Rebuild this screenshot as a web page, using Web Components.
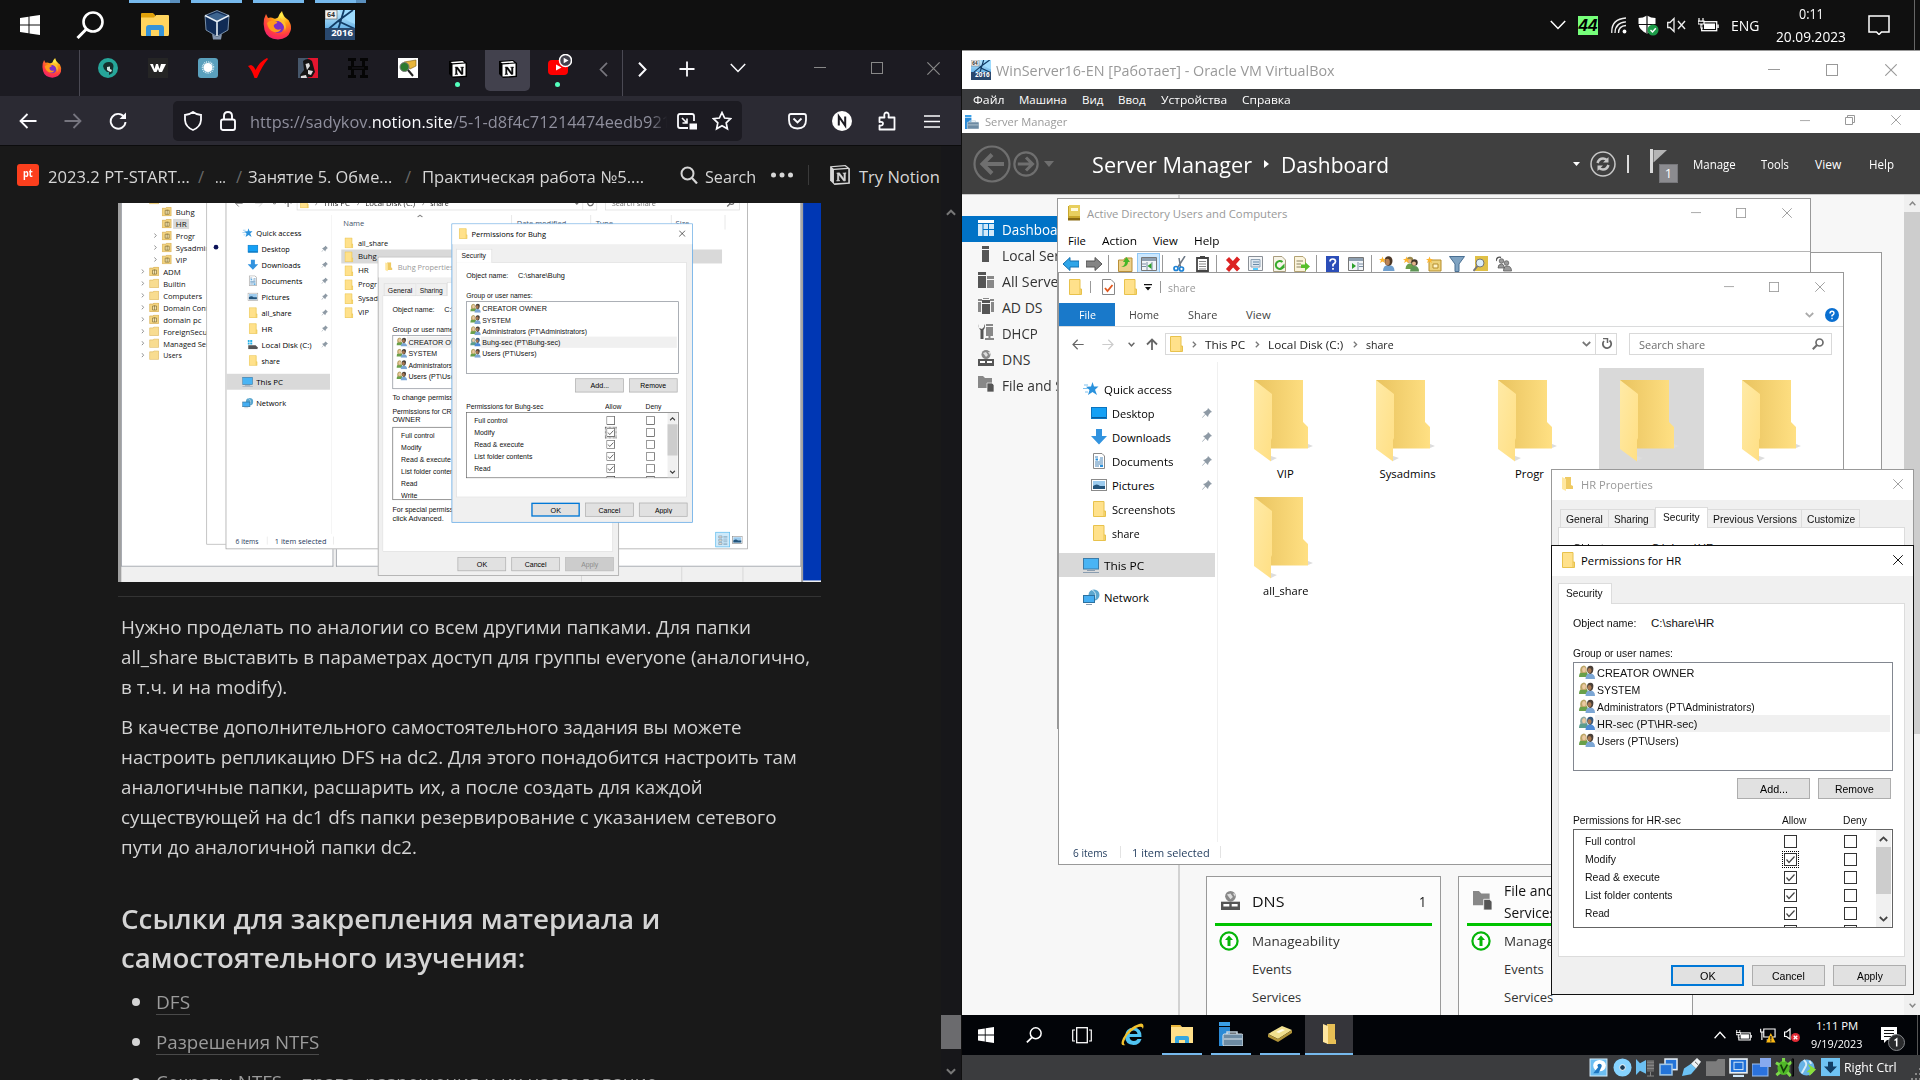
<!DOCTYPE html>
<html lang="ru"><head><meta charset="utf-8"><title>Desktop</title>
<style>
html,body{margin:0;background:#101010}
body{width:1920px;height:1080px;overflow:hidden;font-family:"Open Sans","Noto Sans",sans-serif}
</style></head><body>
<desk-top></desk-top>
<script>
/* Icon drawings: name -> [viewBox, svg body] */
const FOX='<defs><radialGradient id="f" cx=".65" cy=".15" r="1"><stop offset="0" stop-color="#fff44f"/><stop offset=".35" stop-color="#ff980e"/><stop offset=".7" stop-color="#ff3647"/><stop offset="1" stop-color="#e31587"/></radialGradient></defs><path fill="url(#f)" d="M1 8 3 3 5 7Q8 6 11 7.500 13 8 15 6.500 16 3 19 0Q20 5 24 8 26 9 26.500 11Q29 15 27.500 20Q25 28 15 28.500Q4 28 1.500 19Q0 13 1 8Z"/><circle cx="15" cy="16" r="6" fill="#7b2fc8"/><path d="M4 12Q7 8 14 11Q15 12 12 13Q10 14 11 16Q13 20 18 18Q16 22 11 21Q5 19 4 12Z" fill="#ff9a1c"/><path d="M17 7Q25 12 22 20Q21 12 16 10Z" fill="#ffbd2f"/>';
const IC16=t=>'<defs><linearGradient id="b" x2="0" y2="1"><stop stop-color="#c8edff"/><stop offset="1" stop-color="#2d8fd9"/></linearGradient></defs><rect width="30" height="30" fill="url(#b)"/><path d="M14 0 30 0 30 14Q18 10 14 0Z" fill="#9edcff"/><path d="M19 0 13 20M0 22 13 11 30 19M13 11 28 0" stroke="#123c66" stroke-width="1.800" fill="none"/><rect width="12" height="9" fill="#f2f2f2" stroke="#555" stroke-width=".6"/><rect y="18" width="30" height="12" fill="#29486e"/><text x="6" y="7" font-family="Open Sans" font-size="7" font-weight="700" text-anchor="middle" fill="#333">64</text><text x="17" y="26" font-family="Open Sans" font-size="9.500" font-weight="700" text-anchor="middle" fill="#fff">2016</text>';
const NOT='<path d="M1 2 15 1 19 4 19 18 5 19 1 15Z" fill="currentColor"/><path d="M4.500 5.500 17.500 4.600 17.500 16.800 4.500 17.600Z" fill="var(--in,#fff)"/><path d="M2.500 2.900 14.500 2.100 16.500 3.500 4.300 4.300Z" fill="var(--in,#fff)"/><path d="M7 8.200 9.500 8 13.600 13.500V8.800L12.500 8.300 15.500 8V8.500L14.900 8.800V15.300L13.300 15.500 8.900 9.700V14.700L10 15.200 7 15.500V15L7.700 14.700V9Z" fill="currentColor" stroke="currentColor" stroke-width=".5"/>';
const FOLD='<path d="M.5.5H11V10H12.500V15.500H.5Z" fill="#ffe18b" stroke="#e8c24c"/><path d="M11 10V15" stroke="#e8c24c"/>';
const USER=(x,y,h,c)=>`<circle cx="${x}" cy="${y}" r="3.200" fill="${h}"/><circle cx="${x-.5}" cy="${y+1}" r="2" fill="#e2b48c"/><path d="M${x-4.500} ${y+9}Q${x-4} ${y+3.500} ${x} ${y+3.500}Q${x+4.500} ${y+3.500} ${x+4.500} ${y+9}Z" fill="${c}"/>`;
const PAIR=(h1,g,h2,b)=>`<path d="M0 12Q0 7.500 3 7L8 7Q9 9 9 12Z" fill="${g}"/><path d="M1.500 8Q0 1 5 .5Q8.500 1 7.500 8Z" fill="${h1}"/><ellipse cx="5" cy="4.700" rx="1.900" ry="2.600" fill="#ecc9a2"/><path d="M6.500 14Q6.500 8.500 11 8.500Q16 8.500 16 14Z" fill="${b}"/><path d="M8 5Q8 .8 11.500 .8Q15 1 14.300 5Q14 8.500 11.300 9Q8.500 8.500 8 5Z" fill="${h2}"/><ellipse cx="10.500" cy="5.500" rx="2" ry="2.600" fill="#a97851"/>`;
const STAR='<path d="M3.500.5 4.500 3H7L5 4.500 6 7 3.500 5.500 1 7 2 4.500 0 3H2.500Z" fill="#ffb52e"/>';
const I={
win:['0 0 20 20','<path d="M0 3 8.500 1.800V9.500H0ZM9.500 1.600 20 0V9.500H9.500ZM0 10.500H8.500V18.200L0 17ZM9.500 10.500H20V20L9.500 18.400Z" fill="#fff"/>'],
mag:['0 0 28 28','<circle cx="17" cy="11" r="9.500" fill="none" stroke="currentColor" stroke-width="2.600"/><path d="M10.500 18 1.500 27" stroke="currentColor" stroke-width="3"/>'],
mag2:['0 0 18 18','<circle cx="7.500" cy="7.500" r="6" fill="none" stroke="currentColor" stroke-width="2"/><path d="M12 12 17 17.500" stroke="currentColor" stroke-width="2.200"/>'],
expl:['0 0 28 24','<path d="M0 1Q0 0 1 0H12L14 2V6H0Z" fill="#e0a10a"/><path d="M0 4.500H13L15 2H27Q28 2 28 3V21Q28 23 27 23H1Q0 23 0 22Z" fill="#ffd45e"/><path d="M5 23V15Q5 12 8 12H20Q23 12 23 15V23H18V17H10V23Z" fill="#3593d8"/>'],
vbox:['0 0 26 30','<path d="M8 24 13 27 18 24 17 29.500H9Z" fill="#8294ad"/><path d="M13 .5 25 5.500 24 20 13 26.500 2 20 1 5.500Z" fill="#102b55" stroke="#93acc6" stroke-width=".8"/><path d="M4 6 13 2.500 22 6 13 10.500Z" fill="#3d648f"/><path d="M1 5.500 13 11.500 25 5.500M13 11.500V26" fill="none" stroke="#e6eff7" stroke-width="1.600"/>'],
fox:['0 0 29 29',FOX],s16:['0 0 30 30',IC16()],
chd:['0 0 16 10','<path d="M.8 1 8 8.500 15.200 1" fill="none" stroke="currentColor" stroke-width="1.500"/>'],
chu:['0 0 16 10','<path d="M.8 9 8 1.500 15.200 9" fill="none" stroke="currentColor" stroke-width="1.700"/>'],
chdb:['0 0 9 6','<path d="M.8 1 4.500 4.600 8.200 1" fill="none" stroke="currentColor" stroke-width="1.800"/>'],
chub:['0 0 9 6','<path d="M.8 5 4.500 1.400 8.200 5" fill="none" stroke="currentColor" stroke-width="1.800"/>'],
chr:['0 0 9 15','<path d="M1 .8 7.500 7.500 1 14.200" fill="none" stroke="currentColor" stroke-width="2"/>'],
chl:['0 0 9 15','<path d="M8 .8 1.500 7.500 8 14.200" fill="none" stroke="currentColor" stroke-width="1.700"/>'],
crs:['0 0 5 7','<path d="M.8.8 3.600 3.500.8 6.200" fill="none" stroke="currentColor" stroke-width="1.300"/>'],
wifi:['0 0 16 17','<g fill="none" stroke="#eee" stroke-width="1.300"><path d="M.8 16Q0 2 15 1"/><path d="M4 16Q4 5.500 15 4.800"/><path d="M7.500 16Q7.500 9 15 8.500"/></g><circle cx="13.500" cy="14.500" r="1.900" fill="#fff"/>'],
shld:['0 0 21 21','<path d="M9 .5Q13 3 17.500 3V9Q17 15 9 18.500Q1 15 .5 9V3Q5 3 9 .5Z" fill="#fff"/><path d="M9 0V18M0 9.500H18" stroke="#101010" stroke-width="1.200"/><circle cx="15" cy="15" r="5.500" fill="#1c9b48"/><path d="M12.500 15 14.500 17 17.800 13.200" stroke="#fff" fill="none" stroke-width="1.400"/>'],
mute:['0 0 20 16','<path d="M.7 5.500H3L7 1.500V14.500L3 10.500H.7Z" fill="none" stroke="#eee" stroke-width="1.300"/><path d="M11 4 18 12M18 4 11 12" stroke="#eee" stroke-width="1.400"/>'],
bat:['0 0 21 14','<rect x="3.700" y="3.700" width="15" height="9" fill="none" stroke="#fff" stroke-width="1.300"/><rect x="6" y="5.500" width="11" height="5.500" fill="#fff"/><path d="M20 6.500V10" stroke="#fff" stroke-width="1.500"/><path d="M1 0V3M5 0V3M0 3.200H6V6H0ZM3 6V10H5" stroke="#fff" stroke-width="1.200" fill="#101010"/>'],
note:['0 0 22 20','<path d="M1 1H21V17H13.500L11 19.500 8.500 17H1Z" fill="none" stroke="#fff" stroke-width="1.500"/>'],
min:['0 0 12 12','<path d="M0 5.500H12" stroke="currentColor"/>'],
max:['0 0 12 12','<rect x=".5" y=".5" width="11" height="11" fill="none" stroke="currentColor"/>'],
cls:['0 0 12 12','<path d="M.3.3 11.700 11.700M11.700.3.3 11.700" stroke="currentColor" stroke-width="1.100"/>'],
rst:['0 0 10 10','<path d="M.5 2.500H7.500V9.500H.5ZM2.500 2.500V.5H9.500V7.500H7.500" fill="none" stroke="currentColor"/>'],
f1:['0 0 20 20','<circle cx="10" cy="10" r="10" fill="#26a69a"/><path d="M5 8Q6 4 11 4Q15 4 15.500 8L14.500 15 11 17 11 14 9 14 6 11Z" fill="#16302e"/><path d="M9 9 12 8.500V11L14 12 13 14 11 13.500 9 12Z" fill="#d4e6e3"/>'],
f2:['0 0 20 20','<rect width="20" height="20" fill="#252525"/><path d="M2 6H5L6.500 11 8 6H10L11.500 11 13 6H18L14 14H11L10 11 8.500 14H6Z" fill="#fff"/>'],
f3:['0 0 20 20','<rect width="20" height="20" rx="3" fill="#5aa0bd"/><circle cx="10" cy="9.500" r="4.500" fill="#fff"/><circle cx="10" cy="9.500" r="5.500" fill="none" stroke="#e5f3f8" stroke-dasharray=".8 1" stroke-width="1.500"/>'],
f4:['0 0 20 20','<path d="M0 8 3 7Q6 8 7.500 12Q12 3 19 0L20 1Q14 8 9 20H6.500Q4 12 0 8Z" fill="#f00"/>'],
f5:['0 0 20 20','<rect width="11" height="20" fill="#46576b"/><rect x="10" width="10" height="20" fill="#e4152f"/><path d="M5 3Q10-1 14 3L17 14 14 19 3 20 2 17 6 12Z" fill="#141414"/><path d="M7.500 6 11 5 12 8 9 12ZM10 12 15 13 13 17 10 16ZM3 18 8 17 9 20H3Z" fill="#ddd"/>'],
f6:['0 0 20 20','<path d="M0 0H8V3H6V8H14V3H12V0H20V3H17V8H20V12H17V17H20V20H12V17H14V12H6V17H8V20H0V17H3V12H0V8H3V3H0Z" fill="#050505"/><path d="M4 10H16" stroke="#1c1b22"/>'],
f7:['0 0 20 20','<rect width="20" height="20" fill="#fff"/><path d="M6 4 18 2 18 8 12 11Z" fill="#e8b53a" stroke="#7a5a10" stroke-width=".6"/><circle cx="6.500" cy="9" r="4.500" fill="#2c7a2f" stroke="#777"/><path d="M10 12 15 18" stroke="#222" stroke-width="2"/>'],
not:['0 0 20 20',NOT],
yt:['0 0 24 24','<rect y="6" width="20" height="15" rx="4" fill="#f00"/><path d="M8 10.500 13.500 13.500 8 16.500Z" fill="#fff"/><circle cx="17.500" cy="6.500" r="6" fill="#42414d" stroke="#fff" stroke-width="1.500"/><path d="M15.700 3.700 20.500 6.500 15.700 9.300Z" fill="#fff"/>'],
plus:['0 0 16 16','<path d="M8 .5V15.500M.5 8H15.500" stroke="currentColor" stroke-width="1.800"/>'],
ar:['0 0 18 16','<path d="M17.500 8H1.500M8.500 1 1.500 8 8.500 15" fill="none" stroke="currentColor" stroke-width="1.800"/>'],
arr:['0 0 18 16','<path d="M.5 8H16.500M9.500 1 16.500 8 9.500 15" fill="none" stroke="currentColor" stroke-width="1.800"/>'],
aru:['0 0 12 12','<path d="M6 12V1.500M1 6.500 6 1.500 11 6.500" fill="none" stroke="currentColor" stroke-width="1.800"/>'],
rel:['0 0 18 18','<path d="M15 4.800A7.400 7.400 0 1 0 16.500 10" fill="none" stroke="currentColor" stroke-width="1.900"/><path d="M17 .5V7H10.500Z" fill="currentColor"/>'],
shd:['0 0 18 20','<path d="M9 1Q13 4 17 4V9Q16.500 16 9 19Q1.500 16 1 9V4Q5 4 9 1Z" fill="none" stroke="currentColor" stroke-width="1.800"/>'],
lock:['0 0 16 20','<rect x="1" y="8.500" width="14" height="10.500" rx="2" fill="none" stroke="currentColor" stroke-width="1.900"/><path d="M4 8.500V5Q4 1 8 1Q12 1 12 5V8.500" fill="none" stroke="currentColor" stroke-width="1.900"/>'],
pip:['0 0 20 17','<path d="M17 8V3Q17 1 15 1H3Q1 1 1 3V13Q1 15 3 15H11" fill="none" stroke="currentColor" stroke-width="1.800"/><path d="M5 5 9.500 9.500M10 5.500V10H5.500" fill="none" stroke="currentColor" stroke-width="1.600"/><rect x="12.500" y="10.500" width="7.500" height="6" fill="currentColor"/>'],
star:['0 0 20 20','<path d="M10 1.500 12.600 7 18.600 7.700 14.200 11.800 15.400 17.800 10 14.800 4.600 17.800 5.800 11.800 1.400 7.700 7.400 7Z" fill="none" stroke="currentColor" stroke-width="1.700"/>'],
pock:['0 0 19 17','<path d="M3 1H16Q18 1 18 3V7Q18 15.500 9.500 15.500Q1 15.500 1 7V3Q1 1 3 1Z" fill="none" stroke="currentColor" stroke-width="1.800"/><path d="M5.500 5.500 9.500 9.500 13.500 5.500" fill="none" stroke="currentColor" stroke-width="1.800"/>'],
ncir:['0 0 20 20','<circle cx="10" cy="10" r="10" fill="#fff"/><path d="M6.800 14.500V5.500L13.200 14.500V5.500" fill="none" stroke="#1c1b22" stroke-width="2"/>'],
ext:['0 0 18 20','<path d="M1.500 18.500V14.500Q5 15 5 12.500Q5 10.500 1.500 11V6.500H6.500Q5.500 1.500 8.500 1.500Q11.500 1.500 10.500 6.500H16.500V18.500Z" fill="none" stroke="currentColor" stroke-width="1.800" stroke-linejoin="round"/>'],
burg:['0 0 16 13','<path d="M0 1H16M0 6.500H16M0 12H16" stroke="currentColor" stroke-width="1.700"/>'],
dots:['0 0 24 6','<g fill="currentColor"><circle cx="3.500" cy="3" r="2.500"/><circle cx="12" cy="3" r="2.500"/><circle cx="20.500" cy="3" r="2.500"/></g>'],
sm:['0 0 24 24','<rect width="11" height="4" fill="#3aa0e8"/><rect y="5" width="11" height="19" fill="#2a8ad6"/><path d="M8 12V10H18V12" fill="none" stroke="#c3d2dd" stroke-width="1.500"/><rect x="4" y="12" width="20" height="12" rx="1.500" fill="#6d8ba3" stroke="#dfe8ee"/><path d="M5 17H23" stroke="#dfe8ee"/>'],
bk:['0 0 38 38','<circle cx="19" cy="19" r="17.500" fill="none" stroke="currentColor" stroke-width="2.200"/><path d="M31 19H10M19 9.500 9.500 19 19 28.500" fill="none" stroke="currentColor" stroke-width="4"/>'],
fw:['0 0 38 38','<circle cx="19" cy="19" r="17" fill="none" stroke="currentColor" stroke-width="3.200"/><path d="M7 19H28M19 9.500 28.500 19 19 28.500" fill="none" stroke="currentColor" stroke-width="4.500"/>'],
td:['0 0 10 6','<path d="M0 0H10L5 6Z" fill="currentColor"/>'],tr:['0 0 6 10','<path d="M0 0 6 5 0 10Z" fill="currentColor"/>'],
ref:['0 0 26 26','<circle cx="13" cy="13" r="12" fill="none" stroke="#c8c8c8" stroke-width="1.500"/><path d="M7.500 12Q9 7.500 13 7.500Q15 7.500 17 9M18.500 14Q17 18.500 13 18.500Q11 18.500 9 17" fill="none" stroke="#c8c8c8" stroke-width="2.500"/><path d="M18.500 6V11.500H13ZM7.500 20V14.500H13Z" fill="#c8c8c8"/>'],
flag:['0 0 28 34','<path d="M0 0H3V24H0Z" fill="#d8d8d8"/><path d="M3.500 1H17L3.500 13.500Z" fill="#b5b5b5"/><rect x="9.500" y="15.500" width="18" height="18" fill="#8c8c90" stroke="#77777b"/>'],
d1:['0 0 16 16','<path d="M0 0H16V3H0ZM0 4H4.500V16H0ZM5.500 4H10V9H5.500ZM11 4H16V9H11ZM5.500 10H10V16H5.500ZM11 10H16V16H11Z" fill="#d5eaf9"/><path d="M0 0H16V3H0Z" fill="#fff"/>'],
d2:['0 0 16 16','<path d="M4 0H11V3H4ZM4 4H11V16H4Z" fill="#555"/>'],
d3:['0 0 16 16','<path d="M0 0H8V3H0ZM0 4H8V16H0Z" fill="#555"/><path d="M9 4H16V7H9ZM9 8H16V16H9Z" fill="#888"/>'],
d4:['0 0 16 16','<path d="M0 1H4V3H0ZM0 4H3V14H0ZM12 1H16V3H12ZM13 4H16V14H13ZM5 0H11V1H5Z" fill="#888"/><path d="M4 2H12V5H4ZM4 6H12V16H4Z" fill="#555"/>'],
d5:['0 0 16 16','<path d="M1 0V4L4 5 6 3V0Q8 3 5.500 6V15H2.500V6Q0 4 1 0Z" fill="#555"/><path d="M8 0H15V2H8ZM8 3H15V12H8ZM10.500 12H12.500V14H16V16H7V14H10.500Z" fill="#888"/>'],
d6:['0 0 16 16','<circle cx="8" cy="4.500" r="4.500" fill="#888"/><path d="M5 3 8 2 10 5 8 7ZM10 2H12V5Z" fill="#ddd"/><path d="M0 9H16V16H0Z" fill="#555"/><path d="M2 11H7V13H2ZM9 11H14V13H9Z" fill="#fff"/>'],
d7:['0 0 16 16','<path d="M0 0H5L7 2H14V7H9V12H0ZM0 3H6" fill="#888"/><path d="M9 7H14L16 9V16H9Z" fill="#555" stroke="#f7f7f7" stroke-width=".7"/>'],
up:['0 0 20 20','<circle cx="10" cy="10" r="8.600" fill="#fff" stroke="#06b50a" stroke-width="2.200"/><path d="M10 4.500 14 9H11.500V15H8.500V9H6Z" fill="#06b50a"/>'],
book:['0 0 13 16','<path d="M0 1H12V15H0Z" fill="#c8a62c"/><path d="M1 0H12V11H1Z" fill="#e8cf5e"/><path d="M3 3H10V6H3Z" fill="#fffbe0"/><path d="M0 13H12V15.500H0Z" fill="#8a6b12"/>'],
tl:['0 0 16 14','<path d="M0 7 7 .5V4H16V10H7V13.500Z" fill="#2fa5e8" stroke="#1470b0"/>'],
tg:['0 0 16 14','<path d="M16 7 9 .5V4H0V10H9V13.500Z" fill="#858585" stroke="#555"/>'],
tf:['0 0 15 16','<path d="M.5 4H6L7 2H14V15.500H.5Z" fill="#ecd089" stroke="#b98f37"/><path d="M3 11Q7 10 7 6H5L8.500 1 12 6H10Q10 11 3 11Z" fill="#45b628"/>'],
tw:['0 0 16 15','<path d="M.5 1.500H15.500V14.500H.5Z" fill="#f2f5f8" stroke="#777"/><path d="M1 2H15V5H1Z" fill="#8e9fb0"/><path d="M6 6V14M1 8H5M1 10.500H5M11 6V14" stroke="#7a8fa5"/><path d="M10.500 7V13L6.500 10Z" fill="#2ca12c"/>'],
tw2:['0 0 16 15','<path d="M.5 1.500H15.500V14.500H.5Z" fill="#f2f5f8" stroke="#777"/><path d="M1 2H15V5H1Z" fill="#8e9fb0"/><path d="M10 6V14M11 8H15M11 10.500H15" stroke="#7a8fa5"/><path d="M4 7V13L8 10Z" fill="#2ca12c"/>'],
tcut:['0 0 13 16','<path d="M12 0 5 11M6 2 7.500 11" stroke="#6d7885" stroke-width="1.500"/><circle cx="3" cy="12.500" r="2" fill="none" stroke="#1d83d6" stroke-width="1.700"/><circle cx="8.500" cy="13" r="2" fill="none" stroke="#1d83d6" stroke-width="1.700"/>'],
tp:['0 0 13 16','<path d="M1 2H12V15H1Z" fill="#fff" stroke="#444" stroke-width="1.800"/><path d="M4 0H9V3H4Z" fill="#444"/><path d="M3 5.500H10M3 8H10M3 10.500H10M3 13H10" stroke="#888"/>'],
tx:['0 0 16 16','<path d="M2.500 2.500 13.500 14M13.500 2 2.500 14.500" stroke="#dc2222" stroke-width="4.200"/>'],
tpr:['0 0 15 16','<path d="M.5.5H14.500V14.500H.5Z" fill="#f4f6f8" stroke="#8a8f96"/><path d="M3 3.500H12V11H3Z" fill="#dce6ef" stroke="#8fa1b3"/><path d="M5 6H11M5 8.500H11" stroke="#6789a8"/><path d="M5 13H10" stroke="#5cf" stroke-width="2"/>'],
vl:['0 0 15 16','<path d="M1 2H6V5H1ZM1 7H6V10H1ZM1 12H6V15H1ZM8 3H14M8 5H14M8 8H14M8 10H14M8 13H14M8 15H14" fill="#e8d9c8" stroke="#7d9db5"/>'],
trf:['0 0 13 16','<path d="M.5.5H9L12.500 4V15.500H.5Z" fill="#f7f4e8" stroke="#a99d7f"/><path d="M9.500 6A4 4 0 1 0 10.500 10.500" fill="none" stroke="#38ab2c" stroke-width="2"/><path d="M11.500 7.500V12H7Z" fill="#38ab2c"/>'],
tex:['0 0 16 16','<path d="M.5.5H9L11.500 3V15.500H.5Z" fill="#fbf4dc" stroke="#b3a273"/><path d="M2.500 5H9M2.500 8H7M2.500 11H7" stroke="#8a8260"/><path d="M7 8.500H11V6L16 10.500 11 15V12H7Z" fill="#58bf2c"/>'],
th:['0 0 13 16','<rect width="13" height="16" fill="#2b4db8"/><path d="M4 5.500Q4 3 6.700 3Q9.500 3 9.500 5.500Q9.500 7 7 8.500V10.500M7 12V13.800" fill="none" stroke="#fff" stroke-width="1.700"/>'],
u1:['0 0 16 16','<path d="M4 15Q4 9 9.500 9Q15.500 9 15.500 15Z" fill="#6f9fce"/><ellipse cx="9.500" cy="5" rx="4" ry="4.800" fill="#4b3626"/><ellipse cx="8.500" cy="6" rx="2.300" ry="3.200" fill="#b98357"/>'+STAR],
u2:['0 0 16 16',USER(7,4,'#9a8a50','#6b9f4b')+USER(11.500,6.500,'#3f3328','#5d9554')+STAR],
u3:['0 0 16 16','<path d="M3 4H15V15H3Z" fill="#ecd27c" stroke="#b58d2a"/><path d="M7 8H12V12H7Z" fill="#fff3c8" stroke="#b58d2a"/>'+STAR],
fil:['0 0 16 16','<path d="M.5.5H15.500L10 8V15.500H6V8Z" fill="#7fa3c2" stroke="#496f92"/>'],
fnd:['0 0 15 16','<path d="M2 0H15V15H2Z" fill="#e0c046"/><circle cx="7" cy="7" r="4" fill="#dbeefa" stroke="#777"/><path d="M4.500 10 .5 15" stroke="#777" stroke-width="2"/>'],
grp:['0 0 16 16','<g fill="#9a9a9a" stroke="#555" stroke-width=".7"><circle cx="5.500" cy="5" r="2.300"/><circle cx="10.500" cy="7" r="2.300"/><path d="M2 12Q2 8 5.500 8Q8 8 8.500 12ZM7.500 15Q7.500 10 11 10Q15.500 10 15.500 15Z"/></g><path d="M0 5Q1 0 5 1.500" fill="none" stroke="#555" stroke-width="1.400"/>'],
fold:['0 0 13 16',FOLD],
chk:['0 0 13 16','<path d="M.5.5H9L12.500 4V15.500H.5Z" fill="#fff" stroke="#888"/><path d="M3 9 5.500 12 10.500 6" fill="none" stroke="#e2581e" stroke-width="1.800"/>'],
qat:['0 0 8 7','<path d="M0 0H8V1.200H0ZM1 3H7L4 6.500Z" fill="#111"/>'],
hlp:['0 0 14 14','<circle cx="7" cy="7" r="7" fill="#0a6fd0"/><path d="M5 5.500Q5 3.300 7 3.300Q9 3.300 9 5.300Q9 6.500 7 7.500V8.500M7 9.800V11.300" fill="none" stroke="#fff" stroke-width="1.400"/>'],
rfs:['0 0 12 12','<path d="M8.500 2.500A4.200 4.200 0 1 1 3 3" fill="none" stroke="currentColor" stroke-width="1.800"/><path d="M2 .5H6.500V5" fill="none" stroke="currentColor" stroke-width="1.500"/>'],
sms:['0 0 12 12','<circle cx="7.500" cy="4.500" r="3.500" fill="none" stroke="currentColor" stroke-width="1.700"/><path d="M5 7 .8 11.200" stroke="currentColor" stroke-width="2"/>'],
qa:['0 0 16 14','<path d="M9.500 0 11 4.500 15.500 4.500 12 7.800 14 13 9.500 10 5 13 6.500 8 3 4.800 8 4.500Z" fill="#2a92dd"/><path d="M1 3H5M0 6.500H5M2 10H5" stroke="#7cc0ee"/>'],
dsk:['0 0 16 12','<rect x=".5" y=".5" width="15" height="11" fill="#14a0f5" stroke="#0b74bf"/><path d="M1 10.500H15" stroke="#0a5c9c"/>'],
dwn:['0 0 16 16','<path d="M5 0H11V7H16L8 15.500 0 7H5Z" fill="#3293df"/>'],
doc:['0 0 12 16','<path d="M.5.5H9L11.500 3V15.500H.5Z" fill="#fff" stroke="#8a8a8a"/><path d="M2 9H10M2 11H10M2 13H6M2 4H5M7 5H10M6.500 7H10" stroke="#4a86b8"/><path d="M2.500 6.500H5M7 13H10" stroke="#2a92dd" stroke-width="1.800"/>'],
pic:['0 0 16 12','<rect x=".5" y=".5" width="15" height="11" fill="#fff" stroke="#8a8a8a"/><rect x="2" y="2" width="12" height="8" fill="#9ccbee"/><path d="M2 7Q6 4 9 7L14 7V10H2Z" fill="#24557c"/>'],
ldk:['0 0 16 14','<path d="M1 8H12L15 11V14H1Z" fill="#555"/><path d="M0 0H3V3H0ZM4 0H7V3H4ZM0 4H3V7H0ZM4 4H7V7H4Z" fill="#27b1e6"/>'],
pc:['0 0 16 15','<rect x=".5" y=".5" width="15" height="10.500" fill="#49b4f4" stroke="#3b7ba8"/><path d="M4 12.500H12M0 14.500H16" stroke="#8a9db0"/>'],
net:['0 0 17 16','<circle cx="11" cy="6" r="5.500" fill="#5ba7cf"/><path d="M9 1Q14 3 12 10" stroke="#c9e6f3" fill="none"/><rect x=".5" y="6.500" width="11" height="7" fill="#45aef2" stroke="#2d719f"/><path d="M3 15.500H9" stroke="#8a9db0"/>'],
pin:['0 0 10 10','<path d="M6 0 10 4 8.500 4.500 6.500 7 6 9 3.500 6.500.5 9.800 0 9.500 3.200 6 1 4 3 3.500 5.500 1.500Z" fill="#8e9aa5"/>'],
big:['0 0 60 82','<defs><linearGradient id="a" x1="0" x2="1"><stop stop-color="#e9c35f"/><stop offset="1" stop-color="#ffe083"/></linearGradient><linearGradient id="c" x2="1" y2="1"><stop stop-color="#ffeaa6"/><stop offset="1" stop-color="#ffdf84"/></linearGradient></defs><path d="M54 68 59 66 54 64ZM17 81 23 78 17 76Z" fill="#ddd"/><path d="M0 0H49V42L54 47V68.500H10Z" fill="url(#a)"/><path d="M0 0 18 14V58L17 60V81.500L0 69Z" fill="url(#c)"/>'],
usr:['0 0 16 14',PAIR('#b9a566','#69a04a','#4a4038','#7ba6d4')],
usx:['0 0 16 14',PAIR('#8aa8a0','#5c9d8c','#34587d','#4d8ad6')],
prp:['0 0 11 14','<path d="M3 0H9V8L11 9V12H3Z" fill="#efca63"/><path d="M0 0 4 2V14L0 12Z" fill="#ffe7a0"/>'],
tkv:['0 0 20 17','<rect x="4.700" y=".7" width="10.600" height="15" fill="none" stroke="#fff" stroke-width="1.300"/><path d="M3 3H.7V14H3M17 3H19.300V14H17" fill="none" stroke="#fff" stroke-width="1.200"/>'],
ie:['0 0 24 24','<path d="M20.500 14H8.500Q9 18 13 18Q15.500 18 16.500 16H20.500Q18.500 22 12.500 22Q4 21.500 4 13Q4.500 5 12.500 4.500Q21 5 20.500 14ZM8.700 11H16.500Q16 7.500 12.600 7.500Q9.200 7.500 8.700 11Z" fill="#4fc3f2"/><path d="M4.500 22Q-2 24 2 15Q8 4 18 1Q24-1 22 6Q21 2 15 5Q5 11 3 19Q2.500 22 4.500 22Z" fill="#f2c12c"/>'],
ex2:['0 0 22 18','<path d="M0 0H9L11 2H22V18H0Z" fill="#ffe08a"/><path d="M0 0H9L10.500 2H0Z" fill="#e9b63b"/><path d="M4 18V13Q4 11 6 11H16Q18 11 18 13V18H14V15H8V18Z" fill="#35a7e0"/>'],
bk2:['0 0 24 16','<path d="M0 8 14 0 24 4 10 13Z" fill="#f1e08f"/><path d="M0 8 10 13V16L0 11ZM10 13 24 4V7L10 16Z" fill="#b09338"/><path d="M8 6 14 3 17 4 11 7Z" fill="#fffbe2"/>'],
fl2:['0 0 13 20','<path d="M4 0H12V15L13 16V20H4Z" fill="#e7bf55"/><path d="M0 0 5 2V20L0 18Z" fill="#ffe7a0"/>'],
ntw:['0 0 17 15','<path d="M4 1H16V9H4ZM7 12H13M10 9V12M.7.7V4H4M2 4V12" fill="none" stroke="#fff" stroke-width="1.200"/><path d="M11.500 5 16.500 14.500H6.500Z" fill="#fcb813"/><path d="M11.500 8V11.500M11.500 12.300V13.500" stroke="#222" stroke-width="1.300"/>'],
vmx:['0 0 16 14','<path d="M.6 4H2.500L6 1V11L2.500 8.500H.6Z" fill="none" stroke="#fff" stroke-width="1.200"/><circle cx="11.500" cy="9.500" r="4.500" fill="#e02a34"/><path d="M9.700 7.700 13.300 11.300M13.300 7.700 9.700 11.300" stroke="#fff" stroke-width="1.300"/>'],
nt2:['0 0 24 24','<path d="M0 0H16V13H6L3 16V13H0Z" fill="#fff"/><path d="M3 3.500H13M3 6.500H13M3 9.500H10" stroke="#111"/><circle cx="15.500" cy="15.500" r="8" fill="#2a2b2d" stroke="#85888b"/><path d="M13.500 13.500 15.700 12V19.500" stroke="#fff" fill="none" stroke-width="1.500"/>'],
v1:['0 0 18 20','<path d="M1 1H17V19H1Z" fill="#6cbef2" stroke="#d2ebfa"/><circle cx="10" cy="8" r="6" fill="#fff"/><path d="M10 8 4 16H9L12 9Z" fill="#1e77c2"/><circle cx="10" cy="8" r="2" fill="#1e77c2"/>'],
v2:['0 0 20 20','<circle cx="10" cy="10" r="9.500" fill="#86d3ff"/><circle cx="10" cy="10" r="3" fill="#1a3c56" stroke="#fff"/>'],
v3:['0 0 19 18','<path d="M0 1 4 5 10 2V15L4 12 0 16Z" fill="#6cc0f2"/><path d="M11 2H18V13H11Z" fill="#666"/><path d="M11 4H18M11 7H18M11 10H18M14.500 13V16.500M11 17H18" stroke="#858585"/>'],
v4:['0 0 19 18','<rect x="6" y="1" width="12" height="10" fill="#2474d8" stroke="#e5eef5" stroke-width="1.500"/><rect x="1" y="6" width="12" height="10" fill="#2474d8" stroke="#9fc5e5" stroke-width="1.500"/>'],
v5:['0 0 19 20','<path d="M0 19 2 11 9 6 14 11 9 17Z" fill="#6cc2f5"/><path d="M9 6 15 0 19 4 14 11Z" fill="#eef3f6"/><path d="M13 4 16 7" stroke="#555"/>'],
v6:['0 0 19 18','<path d="M0 3H10L12 1H19V17H0Z" fill="#7c7c7c"/>'],
v7:['0 0 19 18','<rect x="1" y="1" width="17" height="13" fill="#1e6fd6" stroke="#e8eef2" stroke-width="1.600"/><rect x="5" y="4" width="9" height="7" fill="none" stroke="#cfe6f8"/><path d="M4 17H15" stroke="#cfe6f8" stroke-width="2"/>'],
v8:['0 0 19 19','<rect y="6" width="16" height="12" fill="#2b72dd" stroke="#9fc0ee"/><rect x="8" width="11" height="9" fill="#87a9ee"/>'],
v9:['0 0 20 20','<ellipse cx="9" cy="10.500" rx="6.500" ry="7.500" fill="#50b828"/><path d="M1 5 4.500 7M14 7 17.500 4M1.500 18 5 15M13 15 16.500 19M9 0V4" stroke="#7bd94a" stroke-width="3.200"/><path d="M6 7 9 14 13 7" stroke="#143e0a" fill="none" stroke-width="1.800"/><path d="M18 1H19.500V19H18Z" fill="none" stroke="#000"/>'],
v10:['0 0 20 20','<circle cx="9" cy="10" r="8.500" fill="#67b3e6"/><path d="M6 2Q10 5 8 9L4 16M12 3 14 6" stroke="#d7ecf8" stroke-width="2" fill="none"/><path d="M10 6 19 12 12 19V15H9L13 11Z" fill="#8ae03c"/>'],
v11:['0 0 19 20','<rect width="19" height="19" fill="#6fc3f3"/><path d="M7 4H12V9H16L9.500 16 3 9H7Z" fill="#123d63"/>'],
grip:['0 0 12 12','<path d="M10 0H12V2H10ZM6 5H8V7H6ZM10 5H12V7H10ZM2 10H4V12H2ZM6 10H8V12H6ZM10 10H12V12H10Z" fill="#888"/>'],
ck:['0 0 13 13','<rect x=".5" y=".5" width="12" height="12" fill="#fff" stroke="#333"/><path d="M2.500 6.500 5 9.500 10.500 3.500" fill="none" stroke="#444" stroke-width="1.200"/>'],
cb:['0 0 13 13','<rect x=".5" y=".5" width="12" height="12" fill="#fff" stroke="#333"/>'],
ou:['0 0 15 14','<path d="M.5 2H6L7 .5H14V13.500H.5Z" fill="#f3d481" stroke="#d3a848"/><path d="M5 5H11V11H5ZM8 4V11" fill="#f7e7b4" stroke="#7e6a31"/>'],
cn:['0 0 15 14','<path d="M.5 2H6L7 .5H14V13.500H.5Z" fill="#f8dc90" stroke="#dcb65f"/>']
};
const define=(name,css,html)=>customElements.define(name,class extends HTMLElement{
  connectedCallback(){ if(this.shadowRoot) return;
    const root=this.attachShadow({mode:'open'});
    root.innerHTML=`<style>:host{display:block;box-sizing:border-box;flex:none}*{box-sizing:border-box}.r{display:flex;align-items:center}${css}</style>`+(typeof html==='function'?html(this):html); }
});
const A=(e,n,d='')=>e.getAttribute(n)??d;
define('i-c','svg{display:block;width:100%;height:100%}',e=>{
  const [vb,body]=I[A(e,'n')]; const s=vb.split(' ');
  e.style.width=A(e,'w',s[2])+'px'; e.style.height=A(e,'h',s[3])+'px'; if(e.hasAttribute('g')) e.style.marginLeft=A(e,'g')+'px';
  return `<svg viewBox="${vb}" preserveAspectRatio="none">${body}</svg>`;});
define('v-sep',':host{width:1px;background:#999}',e=>{e.style.marginLeft=A(e,'g',0)+'px';e.style.height=A(e,'h',14)+'px';return ''});

/* Top host taskbar */
define('app-button',':host{width:51px;height:50px;border-top:3px solid #76b9ed;position:relative;padding-bottom:3px;display:flex;align-items:center;justify-content:center}:host([multi])::after{content:"";position:absolute;right:0;top:-3px;width:10px;height:3px;background:#5a8fbd}',e=>{e.style.marginLeft=A(e,'g')+'px';return '<slot></slot>'});
define('task-bar',`:host{display:flex;align-items:center;height:50px;background:#101010;color:#fff}
.clock{margin-left:16px;width:70px;display:flex;flex-direction:column;align-items:center;font-size:14.500px;line-height:23px;margin-top:0}
.n{margin-left:12px;width:20px;height:19px;background:#76ff7a;color:#000;font:italic 700 17px/20px "Liberation Sans",sans-serif;display:flex;justify-content:center}`,
`<i-c n="win" g="20"></i-c><i-c n="mag" g="36"></i-c>
<app-button g="25" multi><i-c n="expl"></i-c></app-button><app-button g="11"><i-c n="vbox" w="26" h="30"></i-c></app-button><app-button g="11"><i-c n="fox" style="margin-left:-2px"></i-c></app-button><app-button g="11" multi><i-c n="s16" style="margin-left:-2px"></i-c></app-button>
<i-c n="chd" g="1184"></i-c><div class="n"><t-t w="19">44</t-t></div><i-c n="wifi" g="13"></i-c><i-c n="shld" g="11"></i-c><i-c n="mute" g="8"></i-c><i-c n="bat" g="11"></i-c><t-t g="12" w="29" style="font-size:14.500px">ENG</t-t>
<div class="clock"><t-t w="25">0:11</t-t><t-t w="70">20.09.2023</t-t></div><i-c n="note" g="22"></i-c><v-sep g="24" h="50" style="background:#666"></v-sep>`);

/* Browser */
define('fav-tab',':host{width:50px;height:46px;display:flex;flex-direction:column;align-items:center;padding-top:8px;position:relative}:host([dot])::after{content:"";position:absolute;top:32px;left:22px;width:5px;height:5px;border-radius:3px;background:#54ffbd}:host([active]) ::slotted(*){position:relative}:host([active])::before{content:"";position:absolute;left:2px;top:0;width:45px;height:41px;background:#42414d;border-radius:0 0 5px 5px}','<slot></slot>');
define('url-bar',':host{display:flex;align-items:center;width:569px;height:40px;background:#1c1b22;border-radius:5px;color:#fbfbfe;font-size:16px;padding-top:1px}.u{color:#8f8f9d;width:417px;margin:2px 0 0 14px;display:flex;-webkit-mask:linear-gradient(90deg,#000 96%,transparent)}b{font-weight:400;color:#fbfbfe}',
'<i-c n="shd" g="11"></i-c><i-c n="lock" g="18"></i-c><div class="u"><t-t w="421">https://sadykov.<b>notion.site</b>/5-1-d8f4c71214474eedb921</t-t></div><i-c n="pip" g="10"></i-c><i-c n="star" g="15"></i-c>');
define('crumb-bar',':host{display:flex;align-items:center;height:55px;padding-top:6px;color:#d6d6d6;font-size:16.500px}.pt{margin-left:17px;width:22px;height:22px;border-radius:3px;background:#fc3f1d;color:#fff;font-size:10px;font-weight:700;line-height:18px;display:flex;justify-content:center;margin-bottom:3px}.s{color:#6a6a6a}',
'<div class="pt"><t-t w="10">pt</t-t></div><t-t g="9" w="142">2023.2 PT-START...</t-t><t-t class="s" g="8" w="6">/</t-t><t-t g="11" w="11">...</t-t><t-t class="s" g="10" w="6">/</t-t><t-t g="6" w="144">Занятие 5. Обме...</t-t><t-t class="s" g="13" w="6">/</t-t><t-t g="11" w="222">Практическая работа №5....</t-t><i-c n="mag2" g="36" style="margin-bottom:4px"></i-c><t-t g="7" w="51">Search</t-t><i-c n="dots" g="14" style="margin-bottom:4px"></i-c><v-sep g="14" h="20" style="background:#3a3a3a;margin-bottom:4px"></v-sep><i-c n="not" g="20" w="22" h="22" style="--in:#191919;margin-bottom:4px"></i-c><t-t g="8" w="81">Try Notion</t-t>');
const L=(w,t)=>`<div><t-t w="${w}">${t}</t-t></div>`;
define('page-article',`:host{width:703px;margin:2px 0 0 118px;color:#d4d4d4;font-size:18.500px;height:877px;overflow:hidden}
hr{border:0;height:1px;background:#333;margin:14px 0 0}.p{line-height:30px;padding-left:3px}.a{margin-top:15px}.b{margin-top:10px}
.h{margin-top:37px;font-size:27.500px;font-weight:600;line-height:39px;padding-left:3px}
ul{list-style:none;margin:5px 0 0;padding:0}li{display:flex;align-items:center;height:40px;color:#9b9b9b}li::before{content:"";width:8px;height:8px;border-radius:4px;background:#d4d4d4;margin:0 16px 0 14px}li t-t{line-height:24px;border-bottom:1px solid #4a4a4a}`,
`<shot-view></shot-view><hr><div class="p a">${L(630,'Нужно проделать по аналогии со всем другими папками. Для папки')}${L(689,'all_share выставить в параметрах доступ для группы everyone (аналогично,')}${L(166,'в т.ч. и на modify).')}</div>
<div class="p b">${L(621,'В качестве дополнительного самостоятельного задания вы можете')}${L(676,'настроить репликацию DFS на dc2. Для этого понадобится настроить там')}${L(582,'аналогичные папки, расшарить их, а после создать для каждой')}${L(656,'существующей на dc1 dfs папки резервирование с указанием сетевого')}${L(296,'пути до аналогичной папки dc2.')}</div>
<div class="h">${L(539,'Ссылки для закрепления материала и')}${L(404,'самостоятельного изучения:')}</div>
<ul><li><t-t w="34">DFS</t-t></li><li><t-t w="163">Разрешения NTFS</t-t></li><li><t-t w="501">Секреты NTFS – права, разрешения и их наследование</t-t></li></ul>`);
define('browser-window',`:host{width:962px;height:1030px;background:#191919;border-right:1px solid #101010}
.tabs{height:46px;background:#1c1b22;color:#fbfbfe;padding-bottom:8px}.tabs>fav-tab{margin-bottom:-8px}
.nav{height:50px;background:#2b2a33;color:#fbfbfe;border-bottom:1px solid #0c0c0d;padding-top:1px}
.main{display:flex}.col{width:941px}.sb{width:20px;height:934px;background:#17171a;display:flex;flex-direction:column;align-items:center;color:#777;padding-top:63px}.th{width:20px;height:34px;background:#6b6b6e;margin-top:799px}`,
`<div class="r tabs"><fav-tab style="margin-left:27px"><i-c n="fox" w="20" h="20"></i-c></fav-tab><v-sep g="2" h="46" style="background:#4a4953;margin-bottom:-8px"></v-sep>
<fav-tab style="margin-left:3px"><i-c n="f1"></i-c></fav-tab>${['f2','f3','f4','f5','f6','f7'].map(n=>`<fav-tab><i-c n="${n}"></i-c></fav-tab>`).join('')}<fav-tab dot><i-c n="not" style="color:#000;margin-top:1px"></i-c></fav-tab><fav-tab active><i-c n="not" style="color:#000;margin-top:1px"></i-c></fav-tab><fav-tab dot><i-c n="yt" style="margin:-4px 0 0 4px"></i-c></fav-tab>
<i-c n="chl" g="16" style="color:#77767e"></i-c><v-sep g="14" h="46" style="background:#4a4953;margin-bottom:-8px"></v-sep><i-c n="chr" g="15"></i-c><i-c n="plus" g="32"></i-c><i-c n="chd" g="35" style="margin-bottom:3px"></i-c><i-c n="min" g="68" style="color:#888;margin-bottom:2px"></i-c><i-c n="max" g="45" style="color:#888;margin-bottom:2px"></i-c><i-c n="cls" g="44" w="13" h="13" style="color:#888;margin-bottom:2px"></i-c></div>
<div class="r nav"><i-c n="ar" g="19"></i-c><i-c n="arr" g="27" style="color:#76757f"></i-c><i-c n="rel" g="27"></i-c><url-bar style="margin:-1px 0 0 46px"></url-bar><i-c n="pock" g="46"></i-c><i-c n="ncir" g="25"></i-c><i-c n="ext" g="26"></i-c><i-c n="burg" g="28"></i-c></div>
<div class="main"><div class="col"><crumb-bar></crumb-bar><page-article></page-article></div><div class="sb"><i-c n="chub" w="10" h="7"></i-c><div class="th"></div><i-c n="chdb" w="10" h="7" style="margin-top:19px"></i-c></div></div>`);

/* Explorer parts */
define('nav-item',':host{display:flex;align-items:center;height:24px;width:156px;color:#000;font-size:11.300px}:host([sel]){background:#d9d9d9}:host([top]){margin-top:8px}.i{width:16px;display:flex;justify-content:center;margin-right:5px}.e{flex:1}',
e=>{e.style.paddingLeft=(e.hasAttribute('root')?24:32)+'px';return `<div class="i"><i-c n="${A(e,'i')}"></i-c></div><t-t w="${A(e,'tw')}">${A(e,'t')}</t-t><div class="e"></div>${e.hasAttribute('pin')?'<i-c n="pin" style="margin-right:3px"></i-c>':''}`});
/* The "cut" attribute leaves out the title and ribbon labels when those rows lie outside the frame */
define('file-explorer',`:host{display:flex;flex-direction:column;width:786px;height:593px;background:#fff;border:1px solid #999;font-size:11.300px}
.t{height:30px;color:#999;padding-bottom:2px}.rb{height:24px;border-bottom:1px solid #dadbdc;color:#444}.f{width:56px;height:23px;background:#1979ca;color:#fff;display:flex;align-items:center;justify-content:center}
.ad{height:35px;color:#666;padding-bottom:1px}.bx{width:452px;height:22px;border:1px solid #d9d9d9;margin-left:7px;color:#222}.sx{width:203px;height:22px;border:1px solid #d9d9d9;margin-left:12px;color:#6d6d6d}
.bd{flex:1;display:flex;min-height:0}.nv{width:159px;padding-top:15px;border-right:1px solid #f0f0f0}.st{height:22px;color:#1e395b;padding-bottom:2px}`,
e=>{const cut=e.hasAttribute('cut');return `<div class="r t">${cut?'':'<i-c n="fold" g="10"></i-c><v-sep g="8" h="12"></v-sep><i-c n="chk" g="11"></i-c><i-c n="fold" g="9"></i-c><i-c n="qat" g="7"></i-c><v-sep g="8" h="12"></v-sep><t-t g="7" w="28">share</t-t><i-c n="min" w="10" h="10" g="528"></i-c><i-c n="max" w="10" h="10" g="35"></i-c><i-c n="cls" w="10" h="10" g="36"></i-c>'}</div>
<div class="r rb">${cut?'':'<div class="f"><t-t w="17">File</t-t></div><t-t g="14" w="30">Home</t-t><t-t g="29" w="29">Share</t-t><t-t g="29" w="25">View</t-t><i-c n="chdb" g="534" style="color:#aaa"></i-c><i-c n="hlp" g="11"></i-c>'}</div>
<div class="r ad"><i-c n="ar" g="13" w="12" h="11" style="color:#666"></i-c><i-c n="arr" g="18" w="12" h="11" style="color:#ccc"></i-c><i-c n="chdb" g="14" w="7" h="5"></i-c><i-c n="aru" g="11"></i-c>
<div class="r bx"><i-c n="fold" g="4"></i-c><i-c n="crs" g="9" style="color:#777"></i-c><t-t g="8" w="40">This PC</t-t><i-c n="crs" g="10" style="color:#777"></i-c><t-t g="8" w="75">Local Disk (C:)</t-t><i-c n="crs" g="10" style="color:#777"></i-c><t-t g="8" w="28">share</t-t><i-c n="chdb" g="188" style="color:#777"></i-c><v-sep g="4" h="20" style="background:#d9d9d9"></v-sep><i-c n="rfs" g="5" style="color:#666"></i-c></div>
<div class="r sx"><t-t g="9" w="66">Search share</t-t><i-c n="sms" g="107"></i-c></div></div>
<div class="bd"><div class="nv"><slot name="nav"></slot></div><slot></slot></div>
<div class="r st"><t-t g="14" w="34">6 items</t-t><v-sep g="13" h="12" style="background:#e3e3e3"></v-sep><t-t g="11" w="78">1 item selected</t-t><v-sep g="10" h="12" style="background:#e3e3e3"></v-sep></div>`});
define('folder-tile',':host{width:105px;height:116px;padding-top:12px;font-size:11.300px;display:flex;flex-direction:column}:host([sel]){background:#d9d9d9}.l{display:flex;justify-content:center;margin-top:3px;line-height:18px}',
e=>`<i-c n="big" g="21"></i-c><div class="l"><t-t w="${A(e,'tw')}">${A(e,'t')}</t-t></div>`);
define('folder-grid',':host{display:grid;grid-template-columns:repeat(5,105px);gap:1px 17px;padding:6px 0 0 15px;align-content:start}','<slot></slot>');

/* Dialog parts */
define('push-button',':host{width:73px;height:21px;border:1px solid #adadad;background:#e1e1e1;display:flex;align-items:center;justify-content:center;color:#000;margin-right:8px}:host([def]){border:2px solid #0078d7}:host([off]){background:#ccc;border-color:#bfbfbf;color:#8c8c8c}:host([last]){margin-right:0}',e=>`<t-t w="${A(e,'tw')}">${A(e,'t')}</t-t>`);
define('user-row',':host{display:flex;align-items:center;height:17px;padding-left:5px}i-c{margin-bottom:1px}.x{flex:1;height:17px;margin-right:2px;padding-left:2px;display:flex;align-items:center}:host([sel]) .x{background:#f0f0f0}',e=>`<i-c n="${e.hasAttribute('sel')&&e.hasAttribute('tint')?'usx':'usr'}"></i-c><div class="x"><t-t w="${A(e,'tw')}">${A(e,'t')}</t-t></div>`);
define('perm-row',':host{display:flex;align-items:center;height:18px}.l{flex:none;width:199px;padding-left:11px}.l t-t{margin-top:-1px}.c{flex:none;width:60px;padding-left:11px}.c+.c{width:40px}:host([foc]) .f i-c{outline:1px dotted #000;outline-offset:1px}',
e=>`<div class="l">${A(e,'t')?`<t-t w="${A(e,'tw')}">${A(e,'t')}</t-t>`:''}</div><div class="c f"><i-c n="${e.hasAttribute('on')?'ck':'cb'}"></i-c></div><div class="c"><i-c n="cb"></i-c></div>`);
const DLG=`:host{width:363px;background:#f0f0f0;border:1px solid #111;font-family:"Liberation Sans",sans-serif;font-size:11.500px;color:#111;display:flex;flex-direction:column}
.t{height:30px;background:#fff;font-family:"Open Sans",sans-serif;font-size:11.300px;color:#000;padding-bottom:2px}.pg{margin-left:6px;width:347px;background:#fff;border:1px solid #dcdcdc;padding-left:14px}
.tab{background:#fff;border:1px solid #dcdcdc;border-bottom:0;display:flex;align-items:center;justify-content:center}.o{height:20px}.bx{width:320px;border:1px solid #828790;background:#fff}`;
define('perm-dialog',DLG+`:host{height:450px}.tab{width:54px;height:21px;margin:7px 0 -1px 6px;position:relative;justify-content:flex-start;padding-bottom:2px}.pg{height:354px}.lst{height:109px;padding-top:1px}
.pb{border-color:#646464;height:99px;overflow:hidden;display:flex}.rows{width:302px;flex:none;padding-top:2.500px}.sc{width:15px;height:97px;background:#f0f0f0;display:flex;flex-direction:column;align-items:center;padding-top:6px;color:#444}.th{width:15px;height:47px;background:#cdcdcd;margin:5px 0 22px;flex:none}`,
e=>{const n=A(e,'name'),w=A(e,'ws').split(',');return `<div class="r t"><i-c n="fold" g="10"></i-c><t-t g="6" w="${w[0]}">Permissions for ${n}</t-t><div style="flex:1"></div><i-c n="cls" w="10" h="10" style="margin-right:10px"></i-c></div>
<div class="tab"><t-t g="7" w="37">Security</t-t></div><div class="pg"><div class="r o" style="margin-top:9px"><t-t w="63">Object name:</t-t><t-t g="15" w="${w[1]}">C:\\share\\${n}</t-t></div>
<div class="r" style="height:18px;margin-top:11px"><t-t w="100">Group or user names:</t-t></div>
<div class="bx lst"><user-row t="CREATOR OWNER" tw="97"></user-row><user-row t="SYSTEM" tw="43"></user-row><user-row t="Administrators (PT\\Administrators)" tw="158"></user-row><user-row sel tint t="${n}-sec (PT\\${n}-sec)" tw="${w[2]}"></user-row><user-row t="Users (PT\\Users)" tw="82"></user-row></div>
<div class="r" style="margin-top:7px;padding-left:164px"><push-button t="Add..." tw="28"></push-button><push-button t="Remove" tw="39"></push-button></div>
<div class="r" style="height:18px;margin-top:12px;width:320px"><t-t w="${w[3]}">Permissions for ${n}-sec</t-t><div style="flex:1"></div><t-t w="24">Allow</t-t><t-t g="37" w="24" style="margin-right:26px">Deny</t-t></div>
<div class="bx pb"><div class="rows"><perm-row t="Full control" tw="50"></perm-row><perm-row on foc t="Modify" tw="31"></perm-row><perm-row on t="Read &amp; execute" tw="75"></perm-row><perm-row on t="List folder contents" tw="88"></perm-row><perm-row on t="Read" tw="25"></perm-row><perm-row></perm-row></div><div class="sc"><i-c n="chub"></i-c><div class="th"></div><i-c n="chdb"></i-c></div></div></div>
<div class="r" style="margin-top:8px;padding-left:119px"><push-button def t="OK" tw="16"></push-button><push-button t="Cancel" tw="33"></push-button><push-button last t="Apply" tw="26"></push-button></div>`});
define('props-dialog',DLG+`:host{height:480px;border-color:#999}.t{color:#999}.tabs{display:flex;align-items:flex-end;height:28px;padding-left:8px;margin-bottom:-1px;position:relative}.tb{height:19px;border:1px solid #dcdcdc;background:#f0f0f0;display:flex;align-items:center;justify-content:center;border-left-width:0}.tb.s{height:21px;background:#fff;border-bottom:0;border-left-width:1px;padding-bottom:2px}.tb:first-child{border-left-width:1px}.pg{height:416px;overflow:hidden}.lb{line-height:13px}`,
e=>{const n=A(e,'name'),full=e.hasAttribute('full');return `<div class="r t"><i-c n="prp" g="10"></i-c><t-t g="8" w="${A(e,'w')}">${n} Properties</t-t><div style="flex:1"></div>${full?'':'<i-c n="cls" w="10" h="10" style="margin-right:10px"></i-c>'}</div>
<div class="tabs"><div class="tb" style="width:49px"><t-t w="37">General</t-t></div><div class="tb" style="width:46px"><t-t w="35">Sharing</t-t></div>${full?'<div class="tb s" style="width:54px"></div>':'<div class="tb s" style="width:53px"><t-t w="37">Security</t-t></div><div class="tb" style="width:94px"><t-t w="84">Previous Versions</t-t></div><div class="tb" style="width:58px"><t-t w="48">Customize</t-t></div>'}</div>
<div class="pg" style="height:${full?386:416}px"><div class="r o" style="margin-top:10px"><t-t w="63">Object name:</t-t><t-t g="15" w="${n=='HR'?63:71}">C:\\share\\${n}</t-t></div>
${full?`<div class="r" style="height:18px;margin-top:11px"><t-t w="100">Group or user names:</t-t></div><div class="bx" style="height:81px;padding-top:1px"><user-row sel t="CREATOR OWNER" tw="97"></user-row><user-row t="SYSTEM" tw="43"></user-row><user-row t="Administrators (PT\\Administrators)" tw="158"></user-row><user-row t="Users (PT\\Users)" tw="82"></user-row></div>
<div style="margin-top:6px"><t-t w="164">To change permissions, click Edit.</t-t></div><div class="lb" style="margin-top:9px"><t-t w="124">Permissions for CREATOR</t-t></div><div class="lb"><t-t w="42">OWNER</t-t></div>
<div class="bx" style="height:110px;margin-top:4px;padding:3px 0 0 12px;line-height:18px;border-color:#646464">${[['Full control',50],['Modify',31],['Read &amp; execute',75],['List folder contents',88],['Read',25],['Write',25]].map(x=>`<div style="height:18px"><t-t w="${x[1]}">${x[0]}</t-t></div>`).join('')}</div>
<div class="lb" style="margin-top:8px"><t-t w="214">For special permissions or advanced settings,</t-t></div><div class="lb"><t-t w="77">click Advanced.</t-t></div>`:''}</div>
${full?'<div class="r" style="margin-top:8px;padding-left:119px"><push-button t="OK" tw="16"></push-button><push-button t="Cancel" tw="33"></push-button><push-button last off t="Apply" tw="26"></push-button></div>':''}`});

/* Picture embedded in the article: a reduced desktop capture */
define('tree-row',':host{display:flex;align-items:center;height:18px;font-size:11.300px;color:#111}.h{background:#d9d9d9;padding:0 4px;margin-left:-4px}.a{width:12px;color:#888}.g{width:21px}',
e=>{e.style.paddingLeft=(e.hasAttribute('sub')?48:29)+'px';return `<div class="a">${e.hasAttribute('noa')?'':'<i-c n="crs" w="5" h="8"></i-c>'}</div><div class="g"><i-c n="${A(e,'i','cn')}"></i-c></div>${A(e,'t')?`<div class="${e.hasAttribute('sel')?'h':''}"><t-t w="${A(e,'tw')}">${A(e,'t')}</t-t></div>`:''}`});
define('list-row',':host{display:flex;align-items:center;height:21px;width:573px;padding-left:5px;font-size:11.300px;color:#111}:host([sel]){background:#d9d9d9}',e=>`<i-c n="fold"></i-c><t-t g="7" w="${A(e,'tw')}">${A(e,'t')}</t-t>`);
define('shot-view',`:host{width:703px;height:379px;overflow:hidden;background:#fff}
.sc{width:1058px;height:571px;transform:scale(.6645);transform-origin:0 0;position:relative;display:flex;background:#f0f0f0}
.l{width:5px;background:#a0a0a0}.tr{width:319px;height:547px;background:#fff;border:1px solid #828790;border-top:0;margin-right:4px}.tr tree-row:first-child{margin-top:-14px}
.p2{width:700px;height:547px;background:#fff;border:1px solid #828790;border-top:0}.gb{width:3px;background:#a0a0a0}.bl{width:27px;height:568px;background:#0037b4}
.sg{position:absolute;top:548px;height:22px;width:1px;background:#ccc}
.w{position:absolute}.w2{left:133px;top:-4px;width:60px;height:518px;background:#fff;border:1px solid #aaa}.w2::after{content:"";position:absolute;left:10px;top:66px;width:7px;height:7px;border-radius:4px;background:#0b1258}
.hd{display:flex;align-items:center;height:28px;margin-top:-3px;color:#44546b;font-size:11.300px}.ls{margin-top:6px;padding-left:14px}
.ic{position:absolute;left:899px;top:495px;display:flex;align-items:center;gap:3px}.ic div{width:22px;height:23px;border:1px solid #5cbcee;background:#cfeafa;display:flex;align-items:center;justify-content:center}`,
`<div class="sc"><div class="l"></div><div class="tr"><tree-row noa></tree-row><tree-row sub noa i="ou" t="Buhg" tw="28"></tree-row><tree-row sub noa sel i="ou" t="HR" tw="16"></tree-row><tree-row sub i="ou" t="Progr" tw="29"></tree-row><tree-row sub i="ou" t="Sysadmins" tw="57"></tree-row><tree-row sub i="ou" t="VIP" tw="17"></tree-row><tree-row i="ou" t="ADM" tw="27"></tree-row><tree-row t="Builtin" tw="34"></tree-row><tree-row t="Computers" tw="59"></tree-row><tree-row i="ou" t="Domain Controllers" tw="101"></tree-row><tree-row i="ou" t="domain pc" tw="57"></tree-row><tree-row t="ForeignSecurityPrincipals" tw="136"></tree-row><tree-row t="Managed Service Accounts" tw="140"></tree-row><tree-row t="Users" tw="28"></tree-row></div><div class="p2"></div><div class="gb"></div><div class="bl"></div>
<div class="sg" style="left:697px"></div><div class="sg" style="left:848px"></div><div class="sg" style="left:940px"></div>
<div class="w w2"></div>
<file-explorer class="w" cut style="left:162px;top:-72px"><nav-item slot="nav" root i="qa" t="Quick access" tw="68"></nav-item><nav-item slot="nav" pin i="dsk" t="Desktop" tw="43"></nav-item><nav-item slot="nav" pin i="dwn" t="Downloads" tw="59"></nav-item><nav-item slot="nav" pin i="doc" t="Documents" tw="61"></nav-item><nav-item slot="nav" pin i="pic" t="Pictures" tw="42"></nav-item><nav-item slot="nav" pin i="fold" t="all_share" tw="45"></nav-item><nav-item slot="nav" pin i="fold" t="HR" tw="16"></nav-item><nav-item slot="nav" pin i="ldk" t="Local Disk (C:)" tw="75"></nav-item><nav-item slot="nav" i="fold" t="share" tw="28"></nav-item><nav-item slot="nav" root top sel i="pc" t="This PC" tw="40"></nav-item><nav-item slot="nav" root top i="net" t="Network" tw="45"></nav-item>
<div><div class="hd"><t-t g="17" w="32">Name</t-t><i-c n="chub" g="79" w="9" h="5" style="color:#888;margin-bottom:20px"></i-c><v-sep g="133" h="22" style="background:#ddd"></v-sep><t-t g="7" w="75">Date modified</t-t><v-sep g="36" h="22" style="background:#ddd"></v-sep><t-t g="7" w="26">Type</t-t><v-sep g="87" h="22" style="background:#ddd"></v-sep><t-t g="6" w="21">Size</t-t><v-sep g="53" h="22" style="background:#ddd"></v-sep></div>
<div class="ls"><list-row t="all_share" tw="45"></list-row><list-row sel t="Buhg" tw="28"></list-row><list-row t="HR" tw="16"></list-row><list-row t="Progr" tw="29"></list-row><list-row t="Sysadmins" tw="56"></list-row><list-row t="VIP" tw="17"></list-row></div></div></file-explorer>
<div class="ic"><div><i-c n="vl"></i-c></div><i-c n="pic"></i-c></div>
<props-dialog class="w" full name="Buhg" w="84" style="left:391px;top:81px"></props-dialog>
<perm-dialog class="w" name="Buhg" ws="112,71,118,116" style="left:502px;top:31px;border-color:#4a9ee6"></perm-dialog></div>`);

/* Server Manager */
define('side-item',':host{display:flex;align-items:center;height:26px;padding-left:16px;font-size:14px;color:#333}:host([sel]){background:#0072c6;color:#fff}',e=>`<i-c n="${A(e,'i')}" style="margin-bottom:2px"></i-c><t-t g="8" w="${A(e,'tw')}">${A(e,'t')}</t-t>`);
define('role-tile',`:host{width:235px;height:145px;border:1px solid #999;border-bottom:0;background:#fcfcfc;padding:0 8px;color:#333;font-size:13px}.h{height:49px;border-bottom:3px solid #00c300;color:#111;font-size:14.500px;padding:4px 6px 0;line-height:22px;margin-bottom:1px}.m{height:28px}.m t-t{margin-left:15px}.i{width:18px;margin-left:4px}`,
e=>`<div class="r h"><i-c n="${A(e,'i')}" w="19" h="19" style="margin:0 12px 3px 0"></i-c><div style="flex:1">${A(e,'two')?'<t-t w="104">File and Storage</t-t><br><t-t w="52">Services</t-t>':'<t-t w="32">DNS</t-t>'}</div><t-t w="7">1</t-t></div>
${[['Manageability',88],['Events',40],['Services',49]].map((x,i)=>`<div class="r m"><div class="i">${i?'':'<i-c n="up" w="20" h="20"></i-c>'}</div><t-t w="${x[1]}">${x[0]}</t-t></div>`).join('')}`);
define('ad-window',`:host{width:754px;height:531px;background:#fff;border:1px solid #999;font-size:11.300px}.t{height:30px;color:#999;padding-bottom:2px}.m{height:22px;color:#000}.b{height:24px;border-top:1px solid #b5b5b5}.s{width:23px;height:22px;border:1px solid #90c8f6;background:#cce8ff;display:flex;justify-content:center;align-items:center;margin-left:4px}`,
`<div class="r t"><i-c n="book" g="10"></i-c><t-t g="6" w="200">Active Directory Users and Computers</t-t><i-c n="min" g="404" w="10" h="10"></i-c><i-c n="max" g="35" w="10" h="10"></i-c><i-c n="cls" g="36" w="10" h="10"></i-c></div>
<div class="r m"><t-t g="10" w="18">File</t-t><t-t g="16" w="35">Action</t-t><t-t g="16" w="25">View</t-t><t-t g="16" w="25">Help</t-t></div>
<div class="r b"><i-c n="tl" g="5"></i-c><i-c n="tg" g="7"></i-c><v-sep g="6" h="17"></v-sep><i-c n="tf" g="9"></i-c><div class="s"><i-c n="tw"></i-c></div><v-sep g="2" h="17"></v-sep><i-c n="tcut" g="10"></i-c><i-c n="tp" g="10"></i-c><v-sep g="7" h="17"></v-sep><i-c n="tx" g="8"></i-c><i-c n="tpr" g="7"></i-c><i-c n="trf" g="10"></i-c><i-c n="tex" g="8"></i-c><v-sep g="6" h="17"></v-sep><i-c n="th" g="9"></i-c><i-c n="tw2" g="9"></i-c><v-sep g="7" h="17"></v-sep><i-c n="u1" g="7"></i-c><i-c n="u2" g="8"></i-c><i-c n="u3" g="7"></i-c><i-c n="fil" g="7"></i-c><i-c n="fnd" g="8"></i-c><i-c n="grp" g="8"></i-c></div>`);
define('server-manager',`:host{height:905px;background:#f7f7f7}
.t{height:23px;background:#fff;color:#999;font-size:11.300px}.h{height:62px;background:#404040;color:#fff;border-bottom:1px solid #c8c8c8;font-size:22.500px}.h>t-t{margin-top:2px}.sm{font-size:12px}
.c{position:relative;height:820px;display:flex;overflow:hidden}.sd{width:218px;border-right:2px solid #d2d2d2;padding-top:21px}.mn{flex:1;padding:57px 0 0 26px;overflow:hidden}
.wel{width:676px;height:476px;background:#fff;border:1px solid #999}.tiles{display:flex;gap:17px;margin-top:148px}
.sb{width:16px;background:#f0f0f0;display:flex;flex-direction:column;align-items:center;color:#888;padding-top:6px}.th{width:16px;height:522px;background:#cdcdcd;margin-top:6px}.w{position:absolute}.bd{position:relative}.bd span{position:absolute;left:9px;top:15px;width:19px;height:19px;font-size:13px;line-height:19px;text-align:center}`,
`<div class="r t"><i-c n="sm" w="14" h="14" g="3"></i-c><t-t g="6" w="82">Server Manager</t-t><i-c n="min" g="733" w="10" h="10" style="margin-bottom:2px"></i-c><i-c n="rst" g="35" style="margin-bottom:3px"></i-c><i-c n="cls" g="36" w="10" h="10" style="margin-bottom:3px"></i-c></div>
<div class="r h"><i-c n="bk" g="11" style="color:#6f6f6f"></i-c><i-c n="fw" g="2" w="26" h="26" style="color:#6f6f6f"></i-c><i-c n="td" g="5" style="color:#6f6f6f"></i-c><t-t g="38" w="160">Server Manager</t-t><i-c n="tr" g="12" w="5" h="8"></i-c><t-t g="12" w="108">Dashboard</t-t><i-c n="td" g="184" w="7" h="4"></i-c><i-c n="ref" g="10"></i-c><v-sep g="11" h="18" style="background:#ddd;width:2px"></v-sep><div class="bd" style="margin-left:21px;padding-top:5px"><i-c n="flag"></i-c><span style="top:20px">1</span></div><t-t class="sm" g="15" w="43">Manage</t-t><t-t class="sm" g="25" w="28">Tools</t-t><t-t class="sm" g="26" w="26">View</t-t><t-t class="sm" g="28" w="25">Help</t-t></div>
<div class="c"><div class="sd"><side-item sel i="d1" t="Dashboard" tw="69"></side-item><side-item i="d2" t="Local Server" tw="78"></side-item><side-item i="d3" t="All Servers" tw="69"></side-item><side-item i="d4" t="AD DS" tw="40"></side-item><side-item i="d5" t="DHCP" tw="36"></side-item><side-item i="d6" t="DNS" tw="28"></side-item><side-item i="d7" t="File and Storage Services" tw="158"></side-item></div>
<div class="mn"><div class="wel"></div><div class="tiles"><role-tile i="d6"></role-tile><role-tile i="d7" two="1"></role-tile></div></div>
<div class="sb"><i-c n="chub" w="7" h="5"></i-c><div class="th"></div><i-c n="chdb" w="7" h="5" style="margin-top:269px"></i-c></div>
<ad-window class="w" style="left:95px;top:3px"></ad-window>
<file-explorer class="w" style="left:96px;top:77px"><nav-item slot="nav" root i="qa" t="Quick access" tw="68"></nav-item><nav-item slot="nav" pin i="dsk" t="Desktop" tw="43"></nav-item><nav-item slot="nav" pin i="dwn" t="Downloads" tw="59"></nav-item><nav-item slot="nav" pin i="doc" t="Documents" tw="61"></nav-item><nav-item slot="nav" pin i="pic" t="Pictures" tw="42"></nav-item><nav-item slot="nav" i="fold" t="Screenshots" tw="63"></nav-item><nav-item slot="nav" i="fold" t="share" tw="28"></nav-item><nav-item slot="nav" root top sel i="pc" t="This PC" tw="40"></nav-item><nav-item slot="nav" root top i="net" t="Network" tw="45"></nav-item>
<folder-grid><folder-tile t="VIP" tw="17"></folder-tile><folder-tile t="Sysadmins" tw="56"></folder-tile><folder-tile t="Progr" tw="29"></folder-tile><folder-tile sel t="HR" tw="16"></folder-tile><folder-tile t="Buhg" tw="28"></folder-tile><folder-tile t="all_share" tw="45"></folder-tile></folder-grid></file-explorer>
<props-dialog class="w" name="HR" w="72" style="left:589px;top:274px"></props-dialog>
<perm-dialog class="w" name="HR" ws="100,63,100,108" style="left:589px;top:350px"></perm-dialog></div>`);
define('vm-app',':host{height:40px;border-bottom:2px solid #76b9ed;display:flex;align-items:center;justify-content:center;width:40px}:host([act]){width:48px;background:#35353a}',e=>{e.style.marginLeft=A(e,'g')+'px';return '<slot></slot>'});
define('vm-taskbar',':host{display:flex;align-items:center;height:40px;background:#020408;color:#fff;font-size:11.300px}.c{margin-left:11px;width:52px;display:flex;flex-direction:column;align-items:center;line-height:18px;margin-top:-1px}',
`<i-c n="win" g="16" w="16" h="16"></i-c><i-c n="mag" g="32" w="16" h="16"></i-c><i-c n="tkv" g="30"></i-c><i-c n="ie" g="29"></i-c><vm-app g="17"><i-c n="ex2"></i-c></vm-app><vm-app g="9"><i-c n="sm"></i-c></vm-app><vm-app g="9"><i-c n="bk2"></i-c></vm-app><vm-app g="5" act><i-c n="fl2"></i-c></vm-app>
<i-c n="chu" g="361" w="12" h="8"></i-c><i-c n="bat" g="10" w="16" h="11"></i-c><i-c n="ntw" g="8" w="16"></i-c><i-c n="vmx" g="8"></i-c><div class="c"><t-t w="42">1:11 PM</t-t><t-t w="52">9/19/2023</t-t></div><i-c n="nt2" g="18" style="margin-top:8px"></i-c><v-sep g="12" h="40" style="background:#555"></v-sep>`);
define('vm-window',`:host{width:958px;height:1030px;border-top:1px solid #999;background:#3b3c3e}
.t{height:38px;background:#fff;color:#999;font-size:15px}.m{height:21px;background:#3b3c3e;color:#fff;font-size:11.500px;font-weight:500}.s{height:25px;color:#fff;font-size:12.500px}`,
`<div class="r t"><i-c n="s16" w="20" h="20" g="9"></i-c><t-t g="5" w="339">WinServer16-EN [Работает] - Oracle VM VirtualBox</t-t><i-c n="min" g="433"></i-c><i-c n="max" g="46"></i-c><i-c n="cls" g="47"></i-c></div>
<div class="r m"><t-t g="11" w="31">Файл</t-t><t-t g="15" w="48">Машина</t-t><t-t g="15" w="21">Вид</t-t><t-t g="15" w="28">Ввод</t-t><t-t g="15" w="66">Устройства</t-t><t-t g="15" w="49">Справка</t-t></div>
<server-manager></server-manager><vm-taskbar></vm-taskbar>
<div class="r s">${['v1','v2','v3','v4','v5','v6','v7','v8','v9','v10','v11'].map((n,i)=>`<i-c n="${n}" w="19" h="19" g="${i?(i==1||i==5?5:4):627}"></i-c>`).join('')}<t-t g="4" w="53">Right Ctrl</t-t><i-c n="grip" g="12" style="margin-top:12px"></i-c></div>`);
define('desk-top',':host{width:1920px;height:1080px;overflow:hidden;background:#101010}.m{display:flex}','<task-bar></task-bar><div class="m"><browser-window></browser-window><vm-window></vm-window></div>');

/* Single-line label condensed or widened to a set width */
customElements.define('t-t',class extends HTMLElement{
  connectedCallback(){ if(this.shadowRoot) return;
    const root=this.attachShadow({mode:'open'}), w=+this.getAttribute('w');
    root.innerHTML='<style>:host{display:inline-block;flex:none;white-space:pre;vertical-align:top}span{display:inline-block;transform-origin:0 50%;white-space:pre;vertical-align:top}</style><span><slot></slot></span>';
    this.style.width=w+'px'; if(this.hasAttribute('g')) this.style.marginLeft=this.getAttribute('g')+'px';
    const s=root.querySelector('span'), n=s.offsetWidth; if(n) s.style.transform=`scaleX(${w/n})`;
  }});
</script></body></html>
